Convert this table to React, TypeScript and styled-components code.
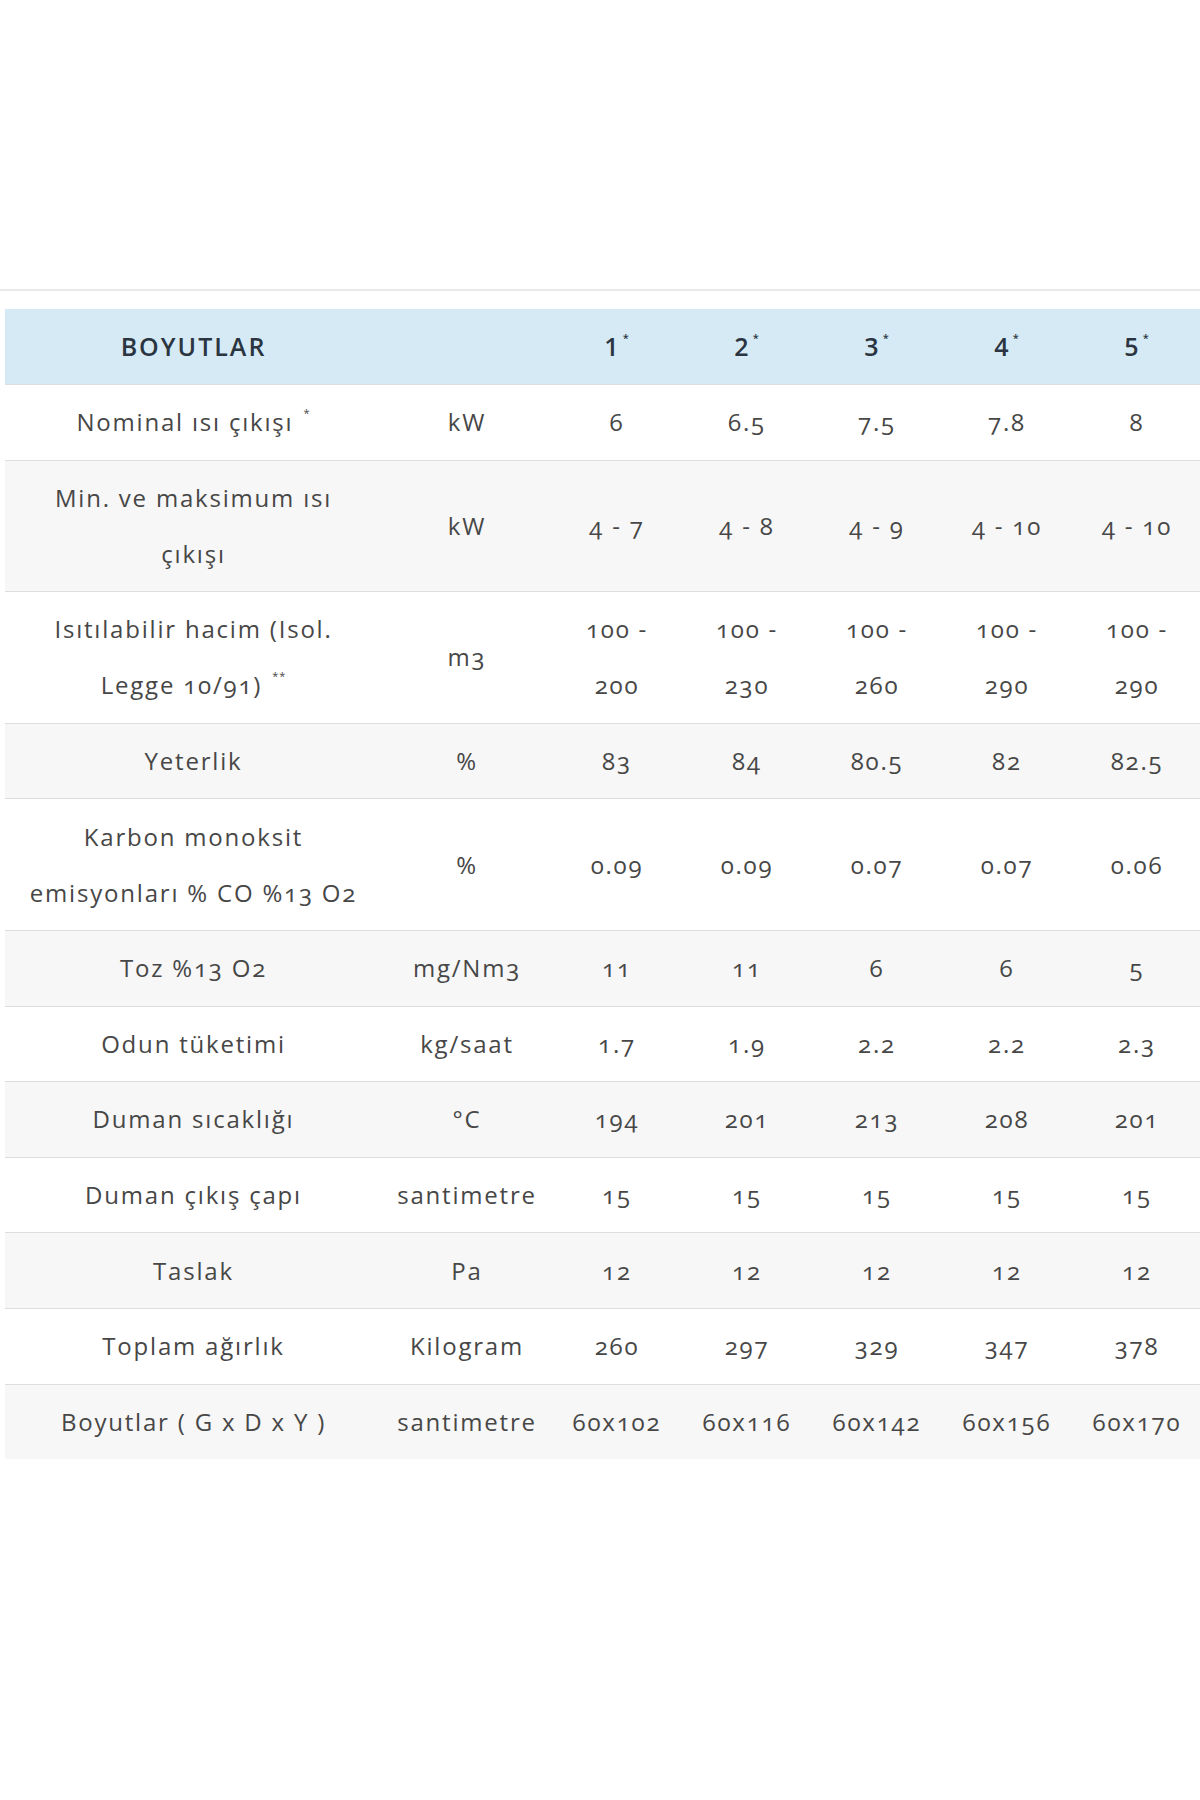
import React from "react";
import styled, { createGlobalStyle } from "styled-components";

// Global styles
const GlobalStyle = createGlobalStyle`
  html, body {
    margin: 0;
    padding: 0;
    background: #fff;
    overflow-x: hidden;
  }
  body {
    font-family: "Open Sans", "Liberation Sans", sans-serif;
  }
`;

// Styled Components
const Page = styled.div`
  padding-top: 289px;
  min-height: 1800px;
  box-sizing: border-box;
`;
const Divider = styled.hr`
  margin: 0 0 18px;
  border: 0;
  border-top: 2px solid #e9e9e9;
`;
const TableWrap = styled.div`
  padding-left: 5px;
`;
const Table = styled.table`
  width: 1197px;
  border-collapse: collapse;
  table-layout: fixed;
  color: #474747;
  font-size: 24px;
  letter-spacing: 1.8px;
  line-height: 56px;
  font-variant-numeric: oldstyle-nums;
`;
const Col = styled.col<{ $w: number }>`
  width: ${(p) => p.$w}px;
`;
const HeadRow = styled.tr`
  background: #d6eaf5;
`;
const HeadCell = styled.th`
  padding: 9px 10px 10px;
  text-align: center;
  color: #2b3541;
  font-size: 25px;
  font-weight: 600;
  letter-spacing: 2px;
  font-variant-numeric: lining-nums;
`;
const Row = styled.tr`
  border-top: 1px solid #dedede;

  &:nth-child(even) {
    background: #f7f7f7;
  }
`;
const Cell = styled.td<{ $label?: boolean }>`
  padding: 9.3px ${(p) => (p.$label ? 14 : 10)}px;
  text-align: center;
  vertical-align: middle;
`;
const Sup = styled.sup`
  font-size: 11px;
  line-height: 0;
  vertical-align: 14px;
  margin-left: 2px;
  letter-spacing: 1px;
`;

type SpecRow = {
  label: string;
  mark?: string;
  unit: string;
  values: string[];
};

const models = ["1", "2", "3", "4", "5"];

const specs: SpecRow[] = [
  { label: "Nominal ısı çıkışı", mark: "*", unit: "kW", values: ["6", "6.5", "7.5", "7.8", "8"] },
  { label: "Min. ve maksimum ısı çıkışı", unit: "kW", values: ["4 - 7", "4 - 8", "4 - 9", "4 - 10", "4 - 10"] },
  {
    label: "Isıtılabilir hacim (Isol. Legge 10/91)",
    mark: "**",
    unit: "m3",
    values: ["100 - 200", "100 - 230", "100 - 260", "100 - 290", "100 - 290"],
  },
  { label: "Yeterlik", unit: "%", values: ["83", "84", "80.5", "82", "82.5"] },
  {
    label: "Karbon monoksit emisyonları % CO %13 O2",
    unit: "%",
    values: ["0.09", "0.09", "0.07", "0.07", "0.06"],
  },
  { label: "Toz %13 O2", unit: "mg/Nm3", values: ["11", "11", "6", "6", "5"] },
  { label: "Odun tüketimi", unit: "kg/saat", values: ["1.7", "1.9", "2.2", "2.2", "2.3"] },
  { label: "Duman sıcaklığı", unit: "°C", values: ["194", "201", "213", "208", "201"] },
  { label: "Duman çıkış çapı", unit: "santimetre", values: ["15", "15", "15", "15", "15"] },
  { label: "Taslak", unit: "Pa", values: ["12", "12", "12", "12", "12"] },
  { label: "Toplam ağırlık", unit: "Kilogram", values: ["260", "297", "329", "347", "378"] },
  {
    label: "Boyutlar ( G x D x Y )",
    unit: "santimetre",
    values: ["60x102", "60x116", "60x142", "60x156", "60x170"],
  },
];

export default function App(): JSX.Element {
  return (
    <Page>
      <GlobalStyle />
      <Divider />
      <TableWrap>
        <Table>
          <colgroup>
            <Col $w={377} />
            <Col $w={170} />
            {models.map((m) => (
              <Col key={m} $w={130} />
            ))}
          </colgroup>
          <thead>
            <HeadRow>
              <HeadCell>BOYUTLAR</HeadCell>
              <HeadCell />
              {models.map((m) => (
                <HeadCell key={m}>
                  {m}
                  <Sup>*</Sup>
                </HeadCell>
              ))}
            </HeadRow>
          </thead>
          <tbody>
            {specs.map((row) => (
              <Row key={row.label}>
                <Cell $label>
                  {row.label}
                  {row.mark && <> <Sup>{row.mark}</Sup></>}
                </Cell>
                <Cell>{row.unit}</Cell>
                {row.values.map((v, i) => (
                  <Cell key={i}>{v}</Cell>
                ))}
              </Row>
            ))}
          </tbody>
        </Table>
      </TableWrap>
    </Page>
  );
}
